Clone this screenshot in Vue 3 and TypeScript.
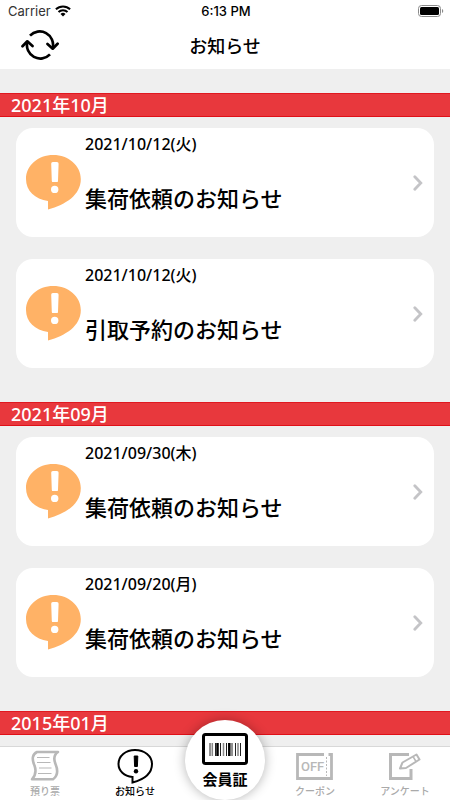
<script setup lang="ts">
interface Notice {
  date: string
  title: string
}
interface Month {
  label: string
  notices: Notice[]
}

const months: Month[] = [
  {
    label: '2021年10月',
    notices: [
      { date: '2021/10/12(火)', title: '集荷依頼のお知らせ' },
      { date: '2021/10/12(火)', title: '引取予約のお知らせ' },
    ],
  },
  {
    label: '2021年09月',
    notices: [
      { date: '2021/09/30(木)', title: '集荷依頼のお知らせ' },
      { date: '2021/09/20(月)', title: '集荷依頼のお知らせ' },
    ],
  },
  { label: '2015年01月', notices: [] },
]
</script>

<template>
  <div class="app">
    <header class="top">
      <div class="status">
        <span class="carrier">
          Carrier
          <svg width="16" height="12" viewBox="0 0 16 12" aria-hidden="true">
            <g fill="none" stroke="#000" stroke-width="2">
              <path d="M0.9 4.3a10.2 10.2 0 0 1 14.2 0" />
              <path d="M3.5 7a6.4 6.4 0 0 1 9 0" />
            </g>
            <path d="M5.5 9a3.6 3.6 0 0 1 5 0L8 11.6z" />
          </svg>
        </span>
        <span class="clock">6:13 PM</span>
        <svg class="battery" width="26" height="12" viewBox="0 0 26 12" aria-hidden="true">
          <rect x="0.5" y="0.5" width="22" height="11" rx="3" fill="none" stroke="#8b8b8b" />
          <rect x="2" y="2" width="19" height="8" rx="1.5" />
          <path d="M24 4v4c1.7-.6 1.7-3.4 0-4z" fill="#8b8b8b" />
        </svg>
      </div>
      <div class="nav">
        <button class="refresh" type="button" aria-label="更新">
          <svg width="38" height="30" viewBox="0 0 38 30" fill="none" stroke="#000" stroke-width="2.7" stroke-linecap="round" stroke-linejoin="round" aria-hidden="true">
            <path d="M9 5.6A13.4 13.4 0 0 1 31.7 18" stroke-linecap="butt" />
            <path d="M26.500 14l5.200 4.700 4.900-5" />
            <path d="M29 24.400A13.400 13.400 0 0 1 6.300 12" stroke-linecap="butt" />
            <path d="M1.500 16.300l4.800-5 5.200 4.700" />
          </svg>
        </button>
        <h1>お知らせ</h1>
      </div>
    </header>

    <main class="list">
      <section v-for="month in months" :key="month.label" class="month">
        <h2>{{ month.label }}</h2>
        <ul v-if="month.notices.length">
          <li v-for="(notice, i) in month.notices" :key="i">
            <a class="card" href="#">
              <svg class="bubble" width="55" height="55" viewBox="0 0 55 55" aria-hidden="true">
                <path d="M27.300 0C42.500 0 54.800 10.500 54.800 24C54.800 40 40 49.500 22 54.500V46C9 44 0 36 0 24C0 10.500 12 0 27.300 0z" fill="#ffb266" />
                <path d="M26.900 7h4a1.700 1.700 0 0 1 1.700 1.800l-.6 17.100a1.300 1.300 0 0 1-1.300 1.200h-3.600a1.300 1.300 0 0 1-1.300-1.200L25.200 8.800A1.700 1.700 0 0 1 26.900 7z" fill="#fff" />
                <circle cx="28.700" cy="34.400" r="3.700" fill="#fff" />
              </svg>
              <span class="text">
                <span class="date">{{ notice.date }}</span>
                <span class="title">{{ notice.title }}</span>
              </span>
              <svg class="chevron" width="10" height="16" viewBox="0 0 10 16" fill="none" stroke="#c4c4c7" stroke-width="2.8" stroke-linecap="round" aria-hidden="true">
                <path d="M1.800 1.700L7.800 8l-6 6.300" />
              </svg>
            </a>
          </li>
        </ul>
      </section>
    </main>

    <nav class="tabs" aria-label="メニュー">
      <a class="tab" href="#">
        <svg width="40" height="36" viewBox="0 0 40 36" fill="none" stroke="#b8b8b8" aria-hidden="true">
          <path d="M12 4H33C28.500 7 28.500 11 30.500 16C33 22 32.500 28 28 31.300H7C10 28 11.500 23 9.500 17.500C6.500 11 7.500 6 12 4z" stroke-width="2.6" stroke-linejoin="round" />
          <path d="M12 9.500h12.500M12 14.500h13.500M14 20h12.500M13 25.500h13.500" stroke-width="1.200" />
        </svg>
        <span>預り票</span>
      </a>
      <a class="tab active" href="#" aria-current="page">
        <svg width="40" height="36" viewBox="0 0 40 36" aria-hidden="true">
          <path d="M20 2C29.500 2 37 8 37 16C37 26 29 31.500 17.500 34.500V29C9 28 3.500 23 3.500 16C3.500 8 10.500 2 20 2z" fill="none" stroke="#000" stroke-width="2" />
          <path d="M19.200 8h3.600l-.4 10.500h-2.800z" stroke="#000" stroke-linejoin="round" />
          <circle cx="21" cy="23.300" r="2.200" />
        </svg>
        <span>お知らせ</span>
      </a>
      <a class="member" href="#">
        <svg width="46" height="32" viewBox="0 0 46 32" aria-hidden="true">
          <rect x="1.500" y="1.500" width="43" height="29" rx="2" fill="#fff" stroke="#000" stroke-width="3" />
          <path d="M8 10v13M13.500 10v13M18.500 10v13M24.500 10v13M30 10v13M33.500 10v13M38.500 10v13" stroke="#222" />
          <path d="M10.300 10v13M21.500 10v13M36 10v13" stroke="#888" stroke-width="1.500" />
          <path d="M15.500 10v13M27.300 10v13" stroke="#000" stroke-width="2.500" />
        </svg>
        <span>会員証</span>
      </a>
      <a class="tab" href="#">
        <svg width="40" height="36" viewBox="0 0 40 36" fill="none" stroke="#b8b8b8" aria-hidden="true">
          <path d="M29 6.500H2.500V30.500H36.500V6.500H33.500" stroke-width="2.800" />
          <path d="M31.500 9v19" stroke-width="1" stroke-dasharray="2 1.500" />
          <text class="off" x="6" y="23">OFF</text>
        </svg>
        <span>クーポン</span>
      </a>
      <a class="tab" href="#">
        <svg width="40" height="36" viewBox="0 0 40 36" fill="none" stroke="#b8b8b8" aria-hidden="true">
          <path d="M24 6.500H5.500V30.500H26V21" stroke-width="3" />
          <path d="M15 20.500l2.500-6L31.500 6.500L34.500 11.500L21 20z" stroke-width="2" stroke-linejoin="round" />
          <path d="M28 8.500l3 5" stroke-width="1.500" />
        </svg>
        <span>アンケート</span>
      </a>
    </nav>
  </div>
</template>

<style>
body {
  margin: 0;
}
</style>

<style scoped>
.app {
  display: flex;
  flex-direction: column;
  height: 100vh;
  overflow: hidden;
  background: #efefef;
  color: #000;
  font-family: "Noto Sans CJK JP", sans-serif;
  font-weight: 500;
}
a {
  color: inherit;
  text-decoration: none;
}
svg {
  display: block;
  flex: none;
}
.top {
  flex: none;
  background: #fff;
}
.status {
  display: grid;
  grid-template-columns: 1fr auto 1fr;
  align-items: center;
  height: 22px;
  padding: 0 6px 0 8px;
  font: 400 13px/22px Inter, "Liberation Sans", sans-serif;
}
.carrier {
  display: flex;
  align-items: center;
  gap: 4px;
  color: #333;
}
.clock {
  font-weight: 500;
}
.battery {
  justify-self: end;
}
.nav {
  box-sizing: border-box;
  display: grid;
  grid-template-columns: 1fr auto 1fr;
  align-items: center;
  height: 47px;
  padding: 0 21px 2px;
}
.refresh {
  justify-self: start;
  padding: 0;
  border: 0;
  background: none;
}
h1 {
  margin: 0;
  font-size: 18px;
  line-height: 24px;
  font-weight: 500;
}
.list {
  flex: 1;
  min-height: 0;
  padding-top: 24px;
  overflow-y: auto;
  scrollbar-width: none;
}
h2 {
  box-sizing: border-box;
  height: 24px;
  margin: 0;
  padding-left: 11px;
  border-top: 1px solid #e01820;
  border-bottom: 1px solid #e01018;
  background: #e8383d;
  color: #fff;
  font-family: "Noto Sans", "Noto Sans CJK JP", sans-serif;
  font-size: 18px;
  line-height: 22px;
  font-weight: 500;
}
ul {
  display: flex;
  flex-direction: column;
  gap: 22px;
  margin: 0;
  padding: 11px 16px 34px;
  list-style: none;
}
.card {
  box-sizing: border-box;
  display: flex;
  align-items: center;
  gap: 4px;
  height: 109px;
  padding: 0 11px 0 10px;
  border-radius: 17px;
  background: #fff;
}
.text {
  display: flex;
  flex: 1;
  flex-direction: column;
  align-self: flex-start;
  gap: 24px;
  padding-top: 4px;
}
.date {
  font-family: "Noto Sans", "Noto Sans CJK JP", sans-serif;
  font-size: 16px;
  line-height: 24px;
}
.title {
  font-size: 22px;
  line-height: 34px;
}
.tabs {
  position: relative;
  display: grid;
  flex: none;
  grid-template-columns: repeat(5, 1fr);
  height: 53px;
  border-top: 1px solid #d8d8d8;
  background: #fff;
}
.tab {
  display: flex;
  flex-direction: column;
  align-items: center;
  padding-top: 1px;
  color: #aaa;
  font-size: 10px;
  line-height: 14px;
}
.active {
  color: #000;
}
.off {
  fill: #b8b8b8;
  stroke: none;
  font: 500 13px/1 Roboto, sans-serif;
}
.member {
  box-sizing: border-box;
  display: flex;
  flex-direction: column;
  align-items: center;
  justify-self: center;
  gap: 4px;
  width: 80px;
  height: 80px;
  margin-top: -27px;
  padding-top: 13px;
  border-radius: 50%;
  background: #fff;
  box-shadow: 0 0 12px rgba(0, 0, 0, 0.3);
  font-size: 15px;
  line-height: 20px;
  font-weight: 700;
}
</style>
